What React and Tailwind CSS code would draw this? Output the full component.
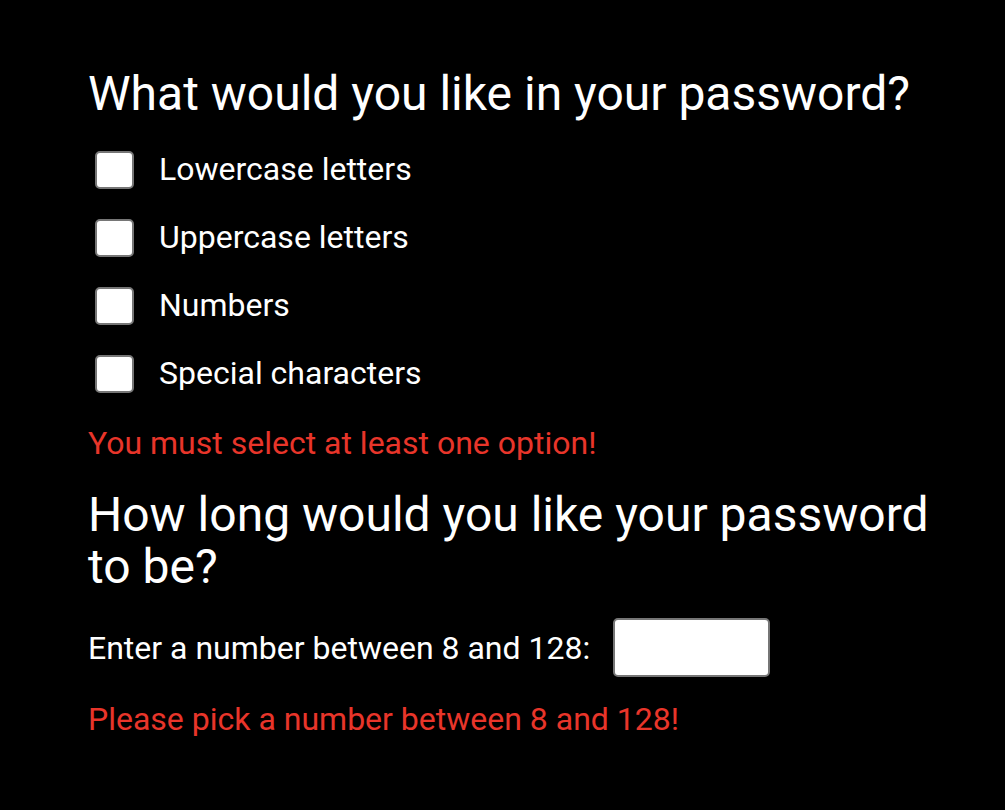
export default function App() {
  const options = ["Lowercase letters", "Uppercase letters", "Numbers", "Special characters"];

  return (
    <div className="min-h-[810px] w-full bg-black text-white pl-[88px] pr-[60px] pt-[66px]" style={{ fontFamily: "Roboto, sans-serif" }}>
      <h2 className="text-[48px] leading-[56px] font-normal">What would you like in your password?</h2>

      <div className="mt-[28px] flex flex-col gap-[29px]">
        {options.map((opt) => (
          <label key={opt} className="flex items-center gap-[25px] pl-[7px]">
            <input
              type="checkbox"
              className="appearance-none w-[39px] h-[38px] bg-white border-2 border-[#767676] rounded-[5px]"
            />
            <span className="text-[32px] leading-[39px]">{opt}</span>
          </label>
        ))}
      </div>

      <p className="mt-[30px] text-[32px] leading-[40px] text-[#e8352a]">You must select at least one option!</p>

      <h2 className="mt-[26px] text-[48px] leading-[52px] font-normal">How long would you like your password to be?</h2>

      <div className="mt-[25px] flex items-center gap-[23px]">
        <span className="text-[32px] leading-[40px]">Enter a number between 8 and 128:</span>
        <input type="text" className="w-[157px] h-[59px] bg-white border-2 border-[#767676] rounded-[5px] text-black px-2" />
      </div>

      <p className="mt-[22px] text-[32px] leading-[40px] text-[#e8352a]">Please pick a number between 8 and 128!</p>
    </div>
  );
}
